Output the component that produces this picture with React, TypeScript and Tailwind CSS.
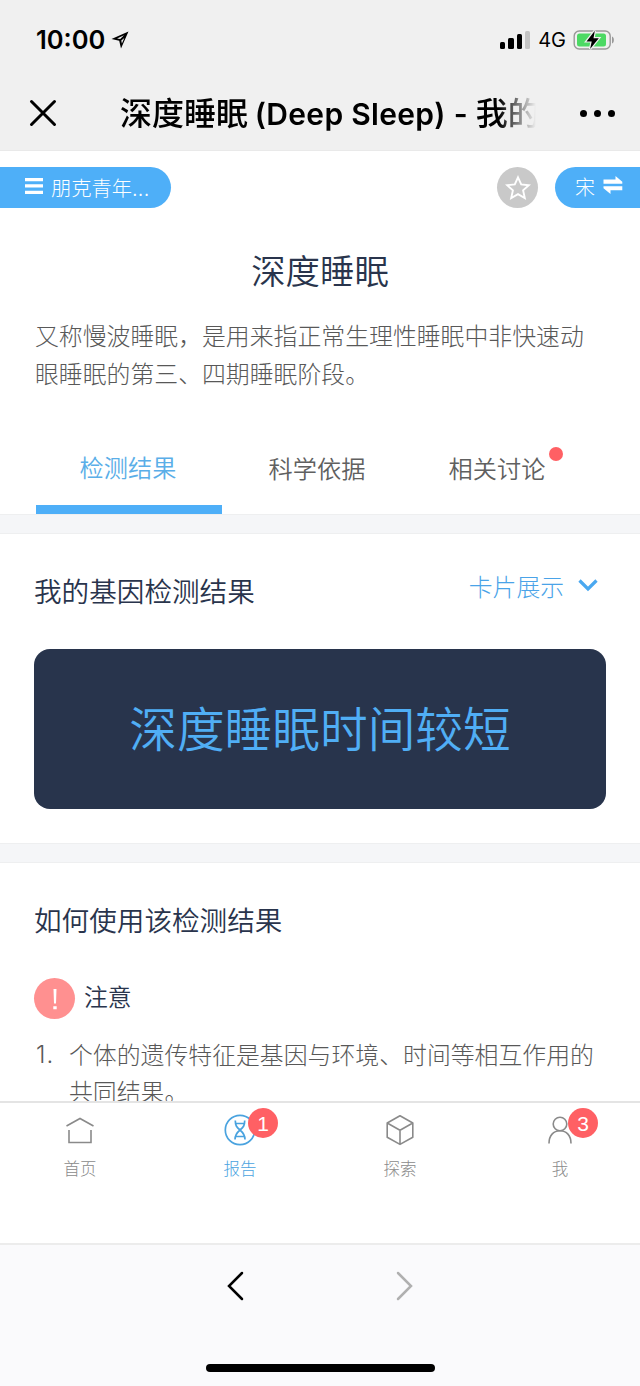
import type { ReactNode } from "react";

const TABS = [
  { label: "检测结果", active: true, dot: false },
  { label: "科学依据", active: false, dot: false },
  { label: "相关讨论", active: false, dot: true },
];

const NAV_ITEMS = [
  { label: "首页", icon: <HomeIcon />, badge: 0, active: false },
  { label: "报告", icon: <ReportIcon />, badge: 1, active: true },
  { label: "探索", icon: <CubeIcon />, badge: 0, active: false },
  { label: "我", icon: <UserIcon />, badge: 3, active: false },
];

function HomeIcon() {
  return (
    <svg width="32" height="32" viewBox="0 0 32 32" fill="none" stroke="#8a8a8a" strokeWidth="1.6">
      <path d="M2.5 12 16 4.5 29.5 12M5 16v12.5h22V16" />
    </svg>
  );
}

function ReportIcon() {
  return (
    <svg width="32" height="32" viewBox="0 0 32 32" fill="none" stroke="#4aa3df" strokeWidth="1.7">
      <circle cx="16" cy="16" r="14.7" />
      <path d="M11.3 6.5c0 5 1.2 6.500 4.700 9.500s5 5 5 9.500M20.700 6.500c0 5-1.200 6.500-4.700 9.500s-5 5-5 9.500" />
      <path d="M11.800 9.500h8.400M12 22.500h8" strokeWidth="1.4" />
    </svg>
  );
}

function CubeIcon() {
  return (
    <svg width="32" height="32" viewBox="0 0 32 32" fill="none" stroke="#8a8a8a" strokeWidth="1.6" strokeLinejoin="round">
      <path d="M16 1.8 28.8 9v14.2L16 30.4 3.2 23.2V9L16 1.8ZM3.2 9 16 16.2 28.8 9M16 16.2v14.2" />
    </svg>
  );
}

function UserIcon() {
  return (
    <svg width="32" height="32" viewBox="0 0 32 32" fill="none" stroke="#8a8a8a" strokeWidth="1.6">
      <circle cx="16" cy="10" r="6.8" />
      <path d="M5 29.5c0-8 4.500-12.700 11-12.700s11 4.700 11 12.700" />
    </svg>
  );
}

function StatusBar() {
  return (
    <div className="flex h-[79px] items-center pl-9 pr-[24px]">
      <span className="pt-px font-['Inter'] text-[25.5px] font-semibold leading-none">10:00</span>
      <svg className="ml-[6px] mt-px" width="18" height="18" viewBox="0 0 18 18" fill="#000" fillRule="evenodd">
        <path d="M17.500.5 10 17.500 8.200 9.800.5 8 17.500.5Zm-4.500 3.800L6 7.400l3.200.7 3.800-3.800Zm-2.700 5.200.6 3 2.400-5.600-3 2.600Z" />
      </svg>
      <div className="ml-auto flex items-end gap-[3px]">
        <div className="h-[7px] w-[5.500px] rounded-[1.500px] bg-black" />
        <div className="h-[11px] w-[5.500px] rounded-[1.500px] bg-black" />
        <div className="h-[15px] w-[5.500px] rounded-[1.500px] bg-black" />
        <div className="h-[18px] w-[5px] rounded-[1.500px] bg-[#c4c4c4]" />
      </div>
      <span className="ml-2 mt-px font-['Inter'] text-[20px] leading-none">4G</span>
      <svg className="ml-[7px]" width="43" height="20" viewBox="0 0 43 20" fill="none">
        <rect x="1.200" y="1" width="36" height="18" rx="5" stroke="#999" strokeWidth="1.400" />
        <rect x="4" y="3.600" width="29" height="12.800" rx="2.500" fill="#4cd964" />
        <path d="M39 6.500c2.500.8 2.500 6.200 0 7v-7Z" fill="#999" />
        <path
          d="m21.800.8-8.300 10.600h5.200l-1.600 7.600 8.700-10.700h-5.300L21.800.8Z"
          fill="#000"
          stroke="#f0f0f0"
          strokeWidth="2.400"
          paintOrder="stroke"
        />
      </svg>
    </div>
  );
}

function TitleBar() {
  return (
    <div className="flex h-[68px] items-center pl-[29px] pr-[24px]">
      <svg width="28" height="28" viewBox="0 0 28 28" fill="none" stroke="#000" strokeWidth="3" strokeLinecap="round">
        <path d="m2.500 2.500 23 23M25.500 2.500l-23 23" />
      </svg>
      <h1 className="ml-[63px] mt-[2px] w-[416px] overflow-hidden whitespace-nowrap bg-linear-to-r from-black from-91% to-transparent to-100% bg-clip-text font-['Inter','Noto_Sans_CJK_SC',sans-serif] text-[30px] font-semibold leading-[44px] tracking-[0.3px] text-transparent">
        <span className="text-[32px] font-medium tracking-normal">深度睡眠</span>
        <span className="ml-[-1px]"> (Deep Sleep) - </span>
        <span className="text-[32px] font-medium tracking-normal">我的</span>
      </h1>
      <div className="ml-auto flex gap-[7px] pr-px">
        <div className="size-[7px] rounded-full bg-black" />
        <div className="size-[7px] rounded-full bg-black" />
        <div className="size-[7px] rounded-full bg-black" />
      </div>
    </div>
  );
}

function ActionRow() {
  return (
    <div className="mt-4 flex h-[41px] shrink-0 items-center">
      <div className="flex h-[41px] w-[171px] items-center rounded-r-full bg-[#4eaff8] pl-[25px] text-[20.3px] font-light text-white">
        <svg className="mb-1" width="18" height="18" viewBox="0 0 18 18" fill="#fff">
          <path d="M0 1h18v3.300H0zM0 7.300h18v3.300H0zM0 13.700h18V17H0z" />
        </svg>
        <span className="mb-px ml-[8px] whitespace-nowrap leading-none">
          朋克青年<span className="tracking-[0.8px]">...</span>
        </span>
      </div>
      <div className="ml-auto flex size-[41px] items-center justify-center rounded-full bg-[#c9c9c9]">
        <svg width="26" height="26" viewBox="0 0 26 26" fill="none" stroke="#fff" strokeWidth="1.900">
          <path d="m13 2.300 3.200 7.100 7.700.8-5.800 5.200 1.700 7.600-6.800-3.900L6.200 23l1.700-7.600-5.800-5.200 7.700-.8L13 2.300Z" />
        </svg>
      </div>
      <div className="ml-[17px] flex h-[41px] w-[85px] items-center rounded-l-full bg-[#4eaff8] pl-[20px] text-[20px] font-light text-white">
        <span className="mb-px leading-none">宋</span>
        <svg className="mb-[5px] ml-[8px]" width="20" height="18" viewBox="0 0 20 18" fill="#fff">
          <path d="M.5 3.500h12V0l6.800 5.700v2H.5zM19.300 14.300H7.500V18L.5 12.200v-2h18.800z" />
        </svg>
      </div>
    </div>
  );
}

function TabBar() {
  return (
    <div className="flex h-[85px] shrink-0 px-9">
      {TABS.map((tab) => (
        <div
          key={tab.label}
          className={
            tab.active
              ? "flex w-[186px] justify-center border-b-[9px] border-[#4eaff8] pt-[20px] pr-[2px] text-[24.2px] font-[350] leading-[36px] text-[#5aaee8]"
              : "flex w-[190px] justify-center pt-[21px] text-[24.2px] font-[350] leading-[36px] text-[#606060] last:w-[170px]"
          }
        >
          <span className="relative">
            {tab.label}
            {tab.dot && <i className="absolute -right-[18px] -top-[3px] size-[14px] rounded-full bg-[#ff6064]" />}
          </span>
        </div>
      ))}
    </div>
  );
}

function Divider() {
  return <div className="h-5 shrink-0 border-y border-[#eeeff0] bg-[#f5f6f8]" />;
}

function SectionTitle({ children }: { children: ReactNode }) {
  return <h3 className="text-[27.6px] font-[350] leading-[40px] text-[#29344c]">{children}</h3>;
}

function BottomNav() {
  return (
    <nav className="grid h-[142px] shrink-0 grid-cols-4 border-t-2 border-[#e4e4e4] bg-white">
      {NAV_ITEMS.map((item) => (
        <div key={item.label} className="flex flex-col items-center pt-[11px]">
          <div className="relative">
            {item.icon}
            {item.badge > 0 && (
              <span className="absolute -right-[22px] -top-[6px] flex size-[30px] items-center justify-center rounded-full bg-[#ff6064] font-['Liberation_Sans'] text-[21px] leading-none text-white">
                {item.badge}
              </span>
            )}
          </div>
          <span
            className={
              item.active
                ? "mt-[9px] text-[16.5px] font-light leading-[26px] text-[#4aa3df]"
                : "mt-[9px] text-[16.5px] font-light leading-[26px] text-[#8a8a8a]"
            }
          >
            {item.label}
          </span>
        </div>
      ))}
    </nav>
  );
}

export default function App() {
  return (
    <div
      lang="zh-CN"
      className="flex h-[1386px] w-[640px] flex-col overflow-hidden bg-white font-['Noto_Sans_CJK_SC',sans-serif] text-black"
    >
      <header className="h-[151px] shrink-0 border-b border-[#e9e9e9] bg-[#f0f0f0]">
        <StatusBar />
        <TitleBar />
      </header>

      <main className="flex h-[950px] shrink-0 flex-col overflow-hidden">
        <ActionRow />
        <h2 className="mt-[36px] shrink-0 text-center text-[34.4px] font-[350] leading-[50px] text-[#29344c]">深度睡眠</h2>
        <p className="mt-[22px] h-[113px] shrink-0 pl-[35px] text-[23.87px] font-light leading-[37.5px] text-[#585858]">
          又称慢波睡眠，是用来指正常生理性睡眠中非快速动
          <br />
          眼睡眠的第三、四期睡眠阶段。
        </p>
        <TabBar />
        <Divider />

        <section className="h-[309px] shrink-0 px-[34px] pt-[36px]">
          <div className="flex h-[79px] items-start justify-between pr-2">
            <SectionTitle>我的基因检测结果</SectionTitle>
            <div className="flex items-center text-[23.8px] font-light leading-[32px] text-[#4aa3e8]">
              卡片展示
              <svg className="mb-[2px] ml-[14px]" width="20" height="14" viewBox="0 0 20 14" fill="none" stroke="#4aa8f0" strokeWidth="3.200">
                <path d="m1.500 2.500 8.500 8.500 8.500-8.500" />
              </svg>
            </div>
          </div>
          <div className="flex h-[160px] items-center justify-center rounded-2xl bg-[#28344c] pb-[4px] text-[47.7px] font-[350] leading-none text-[#50aef5]">
            深度睡眠时间较短
          </div>
        </section>
        <Divider />

        <section className="shrink-0 px-[34px] pt-[36px]">
          <SectionTitle>如何使用该检测结果</SectionTitle>
          <div className="mt-[39px] flex h-[41px] items-center">
            <div className="flex size-[41px] items-center justify-center rounded-full bg-[#ff9090]">
              <svg width="6" height="22" viewBox="0 0 6 22" fill="#fff">
                <path d="M1.500 1h3l-.5 14.500H2zM1.300 18.200h3.400v3H1.300z" />
              </svg>
            </div>
            <span className="mb-[5px] ml-[9px] text-[23.8px] font-[350] leading-none text-[#29344c]">注意</span>
          </div>
          <div className="mt-[16px] flex text-[23.87px] font-light leading-[37px] text-[#585858]">
            <span className="w-[35px] pl-[2px] pt-px font-['Inter'] tracking-[1px]">1.</span>
            <p className="whitespace-nowrap">
              个体的遗传特征是基因与环境、时间等相互作用的
              <br />
              共同结果。
            </p>
          </div>
        </section>
      </main>

      <BottomNav />

      <footer className="flex h-[143px] shrink-0 flex-col items-center border-t-2 border-[#ececec] bg-[#fafafc]">
        <div className="mt-[25px] flex gap-[150px]">
          <svg width="20" height="32" viewBox="0 0 20 32" fill="none" stroke="#000" strokeWidth="2.500" strokeLinecap="round">
            <path d="M17 3 4 16l13 13" />
          </svg>
          <svg width="20" height="32" viewBox="0 0 20 32" fill="none" stroke="#b0b0b0" strokeWidth="2.500" strokeLinecap="round">
            <path d="m3 3 13 13L3 29" />
          </svg>
        </div>
        <div className="mt-[62px] h-2 w-[229px] shrink-0 rounded-full bg-black" />
      </footer>
    </div>
  );
}
